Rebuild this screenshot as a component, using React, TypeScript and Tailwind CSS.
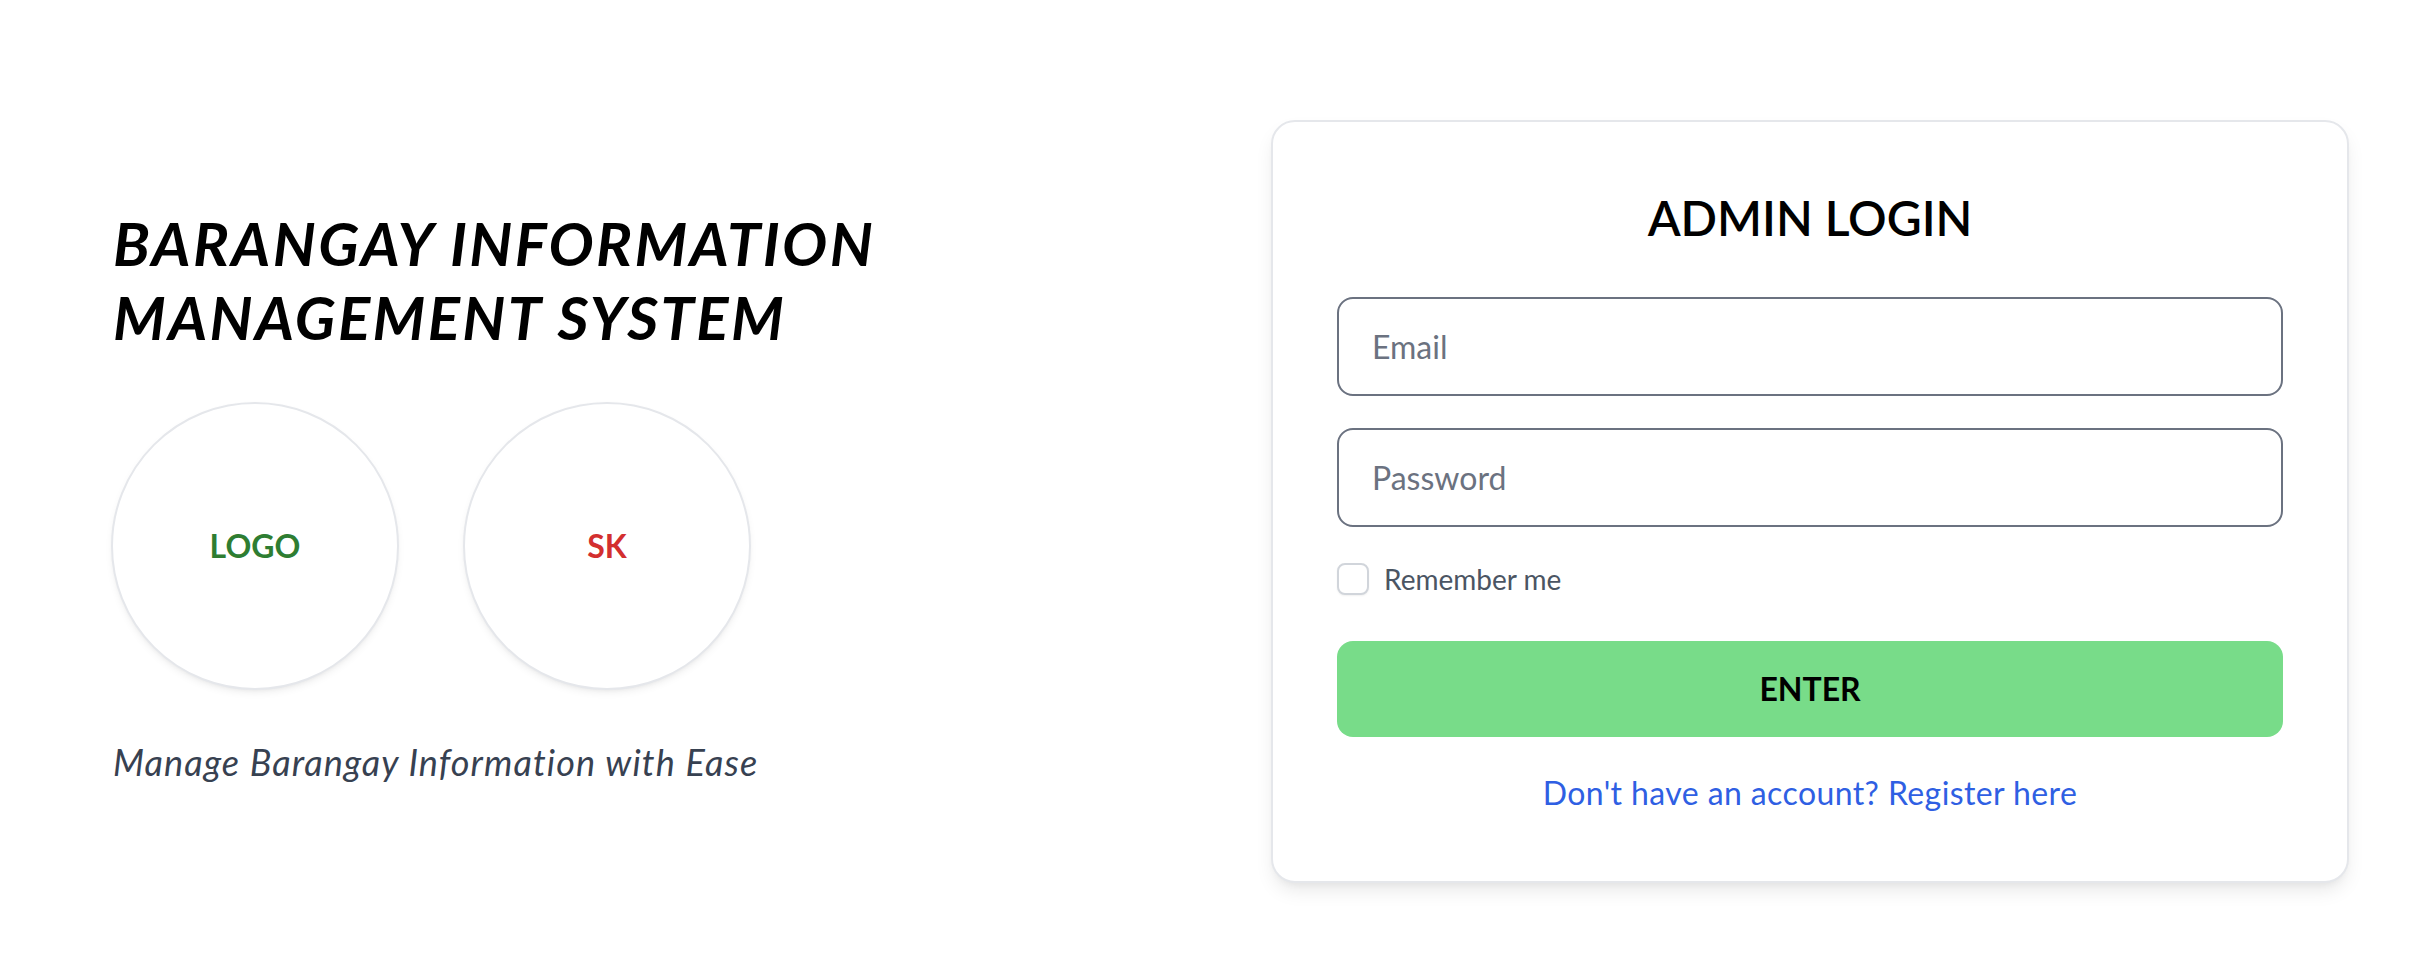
import React from 'react';

const Badge: React.FC<{ label: string; tone: string }> = ({ label, tone }) => (
  <div className="w-[288px] h-[288px] rounded-full border-2 border-[#e5e7eb] bg-white shadow-[0_4px_8px_-2px_rgba(0,0,0,0.08),0_2px_4px_-2px_rgba(0,0,0,0.05)] flex items-center justify-center">
    <span className={`text-[32px] font-bold ${tone}`}>{label}</span>
  </div>
);

export default function App() {
  return (
    <div className="min-h-screen bg-white font-['Lato',sans-serif]">
      <div className="flex items-start justify-between pl-[111px] pr-[73px] pt-[120px]">
        {/* Left: branding */}
        <div className="mt-[86px] flex flex-col">
          <h1 className="text-[60px] leading-[74px] font-bold italic tracking-[2.4px] text-black pl-[2px]">
            BARANGAY INFORMATION
            <br />
            MANAGEMENT SYSTEM
          </h1>
          <div className="flex gap-16 mt-[48px]">
            <Badge label="LOGO" tone="text-[#2e7d32]" />
            <Badge label="SK" tone="text-[#d32f2f]" />
          </div>
          <p className="mt-[44px] pl-[2px] text-[36px] leading-[56px] italic tracking-[1.1px] text-[#374151]">
            Manage Barangay Information with Ease
          </p>
        </div>

        {/* Right: login card */}
        <div className="w-[1078px] bg-white border-2 border-[#e5e7eb] rounded-[24px] p-16 shadow-[0_10px_20px_-4px_rgba(0,0,0,0.10),0_4px_8px_-4px_rgba(0,0,0,0.06)]">
          <h2 className="text-center text-[48px] leading-[64px] font-semibold text-black mb-[47px]">
            ADMIN LOGIN
          </h2>

          <div className="flex flex-col gap-[32px]">
            <input
              type="email"
              placeholder="Email"
              className="w-full h-[99px] px-[33px] border-2 border-[#6b7280] rounded-[16px] text-[32px] text-gray-900 placeholder:text-[#6b7280] outline-none bg-white"
            />
            <input
              type="password"
              placeholder="Password"
              className="w-full h-[99px] px-[33px] border-2 border-[#6b7280] rounded-[16px] text-[32px] text-gray-900 placeholder:text-[#6b7280] outline-none bg-white"
            />
          </div>

          <label className="flex items-center h-[40px] mt-[32px]">
            <span className="w-[32px] h-[32px] rounded-[8px] border-2 border-[#d1d5db] bg-white shadow-[0_1px_2px_rgba(0,0,0,0.06)]" />
            <span className="ml-[15px] text-[28px] text-[#4b5563]">Remember me</span>
          </label>

          <button className="w-full h-[96px] mt-[42px] rounded-[16px] bg-[#78dc89] text-black text-[32px] font-bold">
            ENTER
          </button>

          <p className="mt-[32px] text-center text-[32px] leading-[48px] tracking-[0.4px] text-[#2f5fe3]">
            Don't have an account? Register here
          </p>
        </div>
      </div>
    </div>
  );
}
